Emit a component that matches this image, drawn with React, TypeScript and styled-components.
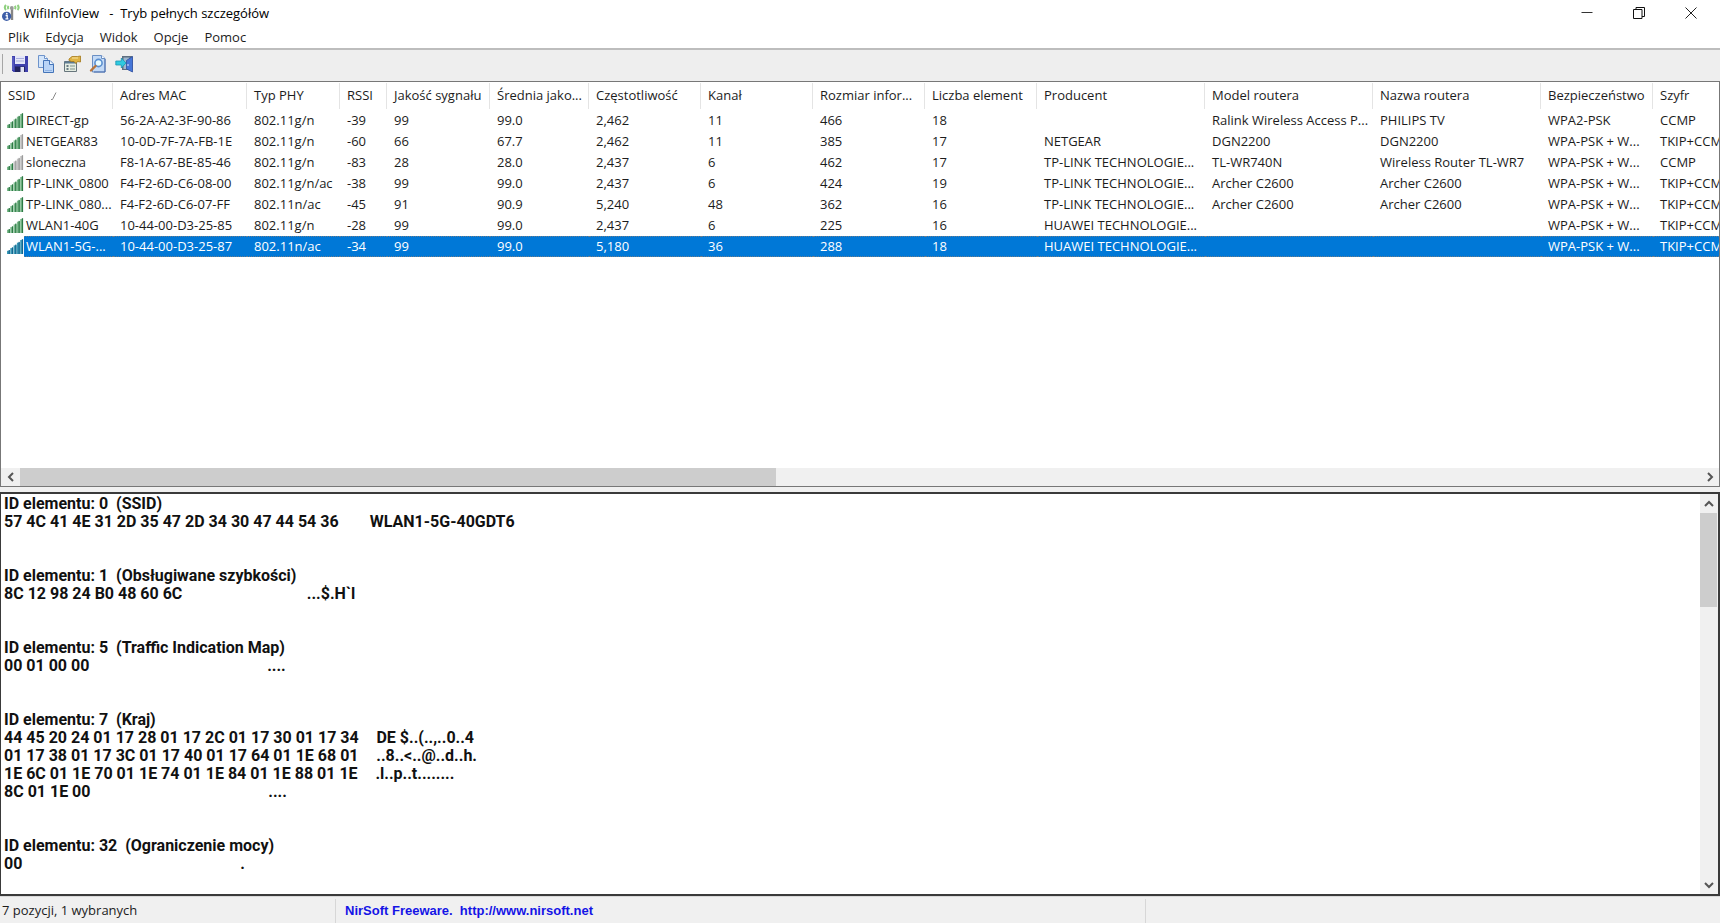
import React from "react";
import styled, { createGlobalStyle, css } from "styled-components";

const uiFont = `"Open Sans", "Noto Sans", sans-serif`;

const GlobalStyle = createGlobalStyle`
  *, *::before, *::after { box-sizing: border-box; }
  body { margin: 0; background: #fff; color: #1c1c1c; font: 13px/20px ${uiFont}; }
  button { font: inherit; color: inherit; border: 0; padding: 0; background: none; }
`;

const Window = styled.div`
  display: flex;
  flex-direction: column;
  height: 100vh;
  min-height: 400px;
  overflow: hidden;
  background: #f0f0f0;
`;

const TitleBar = styled.header`
  display: flex;
  align-items: center;
  flex: none;
  height: 26px;
  padding: 0 3px 0 2px;
  gap: 4px;
  background: #fff;
`;

const Title = styled.h1`
  flex: 1;
  margin: 0;
  font-size: 13px;
  font-weight: 400;
  white-space: pre;
  color: #000;
`;

const WindowButtons = styled.div`
  display: flex;
`;

const WindowButton = styled.button`
  display: flex;
  align-items: center;
  justify-content: center;
  width: 52px;
  height: 24px;
`;

const MenuBar = styled.nav`
  display: flex;
  flex: none;
  gap: 16px;
  height: 24px;
  padding: 0 8px;
  background: #fff;
  border-bottom: 2px solid #bdbdbd;
`;

const MenuButton = styled.button`
  height: 22px;
  line-height: 22px;
`;

const ToolBar = styled.div`
  display: flex;
  align-items: center;
  flex: none;
  height: 31px;
  padding: 0 0 4px 2px;
  background: #eeeeee;
`;

const Grip = styled.span`
  width: 1px;
  height: 20px;
  margin-right: 4px;
  background: #a6a6a6;
`;

const ToolButton = styled.button`
  display: flex;
  align-items: center;
  justify-content: center;
  width: 26px;
  height: 26px;
`;

const ListPane = styled.main`
  display: flex;
  flex-direction: column;
  flex: 1 1 6px;
  min-height: 0;
  border: 1px solid #777;
  background: #fff;
`;

const ListView = styled.div`
  flex: 1;
  min-height: 0;
  overflow: hidden;
`;

const Table = styled.table`
  width: 1780px;
  table-layout: fixed;
  border-collapse: separate;
  border-spacing: 0;
`;

const HeaderCell = styled.th`
  height: 28px;
  padding: 0 0 2px 7px;
  overflow: hidden;
  text-align: left;
  font-weight: 400;
  white-space: nowrap;
  background: linear-gradient(#e4e4e4, #e4e4e4) right 0 top 1px / 1px 26px no-repeat;
`;

const SortMark = styled.svg`
  margin-left: 16px;
`;

const Cell = styled.td`
  height: 21px;
  padding: 0 0 0 7px;
  overflow: hidden;
  line-height: 19px;
  white-space: nowrap;
`;

const NameCell = styled(Cell)`
  padding-left: 6px;
`;

const NameBox = styled.div`
  display: flex;
  align-items: center;
  height: 21px;
`;

const NameLabel = styled.span`
  flex: 1;
  height: 21px;
  padding-left: 2px;
  line-height: 21px;
`;

const selectedFill = css`
  color: #fff;
  background: #0078d7;
  border-top: 1px dotted #6b7d8c;
  border-bottom: 1px dotted #6b7d8c;
`;

const Row = styled.tr<{ $selected?: boolean }>`
  ${(p) =>
    p.$selected &&
    css`
      ${Cell}:not(:first-child) {
        ${selectedFill}
      }
      ${NameLabel} {
        ${selectedFill}
        line-height: 19px;
      }
    `}
`;

const HScroll = styled.div`
  display: flex;
  flex: none;
  height: 18px;
  background: #f0f0f0;
`;

const VScroll = styled.div`
  display: flex;
  flex-direction: column;
  flex: none;
  width: 18px;
  padding-right: 1px;
  background: #f0f0f0;
`;

const ScrollButton = styled.button`
  display: flex;
  align-items: center;
  justify-content: center;
  flex: none;
  width: 19px;
  height: 18px;

  ${VScroll} & {
    width: 17px;
    height: 19px;
  }
`;

const Track = styled.div`
  flex: 1;
`;

const HThumb = styled.div`
  width: 45%;
  height: 18px;
  background: #cdcdcd;
`;

const VThumb = styled.div`
  height: 26%;
  background: #cdcdcd;
`;

const DetailPane = styled.section`
  display: flex;
  flex: 1 1 0;
  min-height: 0;
  margin-top: 5px;
  border: 2px solid #3a3a3a;
  border-width: 2px 2px 2px 1px;
  background: #fff;
`;

const Dump = styled.pre`
  flex: 1;
  min-width: 0;
  margin: 0;
  padding: 1px 3px;
  overflow: hidden;
  font: 700 16px/18px Roboto, sans-serif;
  color: #111;
`;

const Pad = styled.span`
  font-family: "Liberation Sans", sans-serif;
`;

const StatusBar = styled.footer`
  display: flex;
  flex: none;
  height: 27px;
  padding-top: 2px;
  background: #f0f0f0;
  border-top: 1px solid #d9d9d9;
`;

const StatusPart = styled.div<{ $width?: number }>`
  width: ${(p) => (p.$width ? `${p.$width}px` : "auto")};
  flex: ${(p) => (p.$width ? "none" : "1")};
  padding-left: 2px;
  line-height: 22px;
  border-right: ${(p) => (p.$width ? "1px solid #d7d7d7" : "0")};
`;

const StatusLink = styled.a`
  padding-left: 7px;
  font: 700 13px/20px "Liberation Sans", sans-serif;
  color: #1414e6;
  text-decoration: none;
  white-space: pre;
`;

const AppIcon = () => (
  <svg width="18" height="18" viewBox="0 0 18 18" fill="none" aria-hidden="true">
    <path d="M4 1C2.600 2.500 2.600 4.500 4 6M6.600 1.800C5.800 2.900 5.800 4.100 6.600 5.200M15.500 1c1.400 1.500 1.400 3.500 0 5M12.800 1.800c.8 1.100.8 2.300 0 3.400" stroke="#8fd07f" strokeWidth="2" />
    <path d="M10 4v12" stroke="#858585" strokeWidth="2.400" />
    <circle cx="9.800" cy="4" r="1.900" fill="#9a9a9a" />
    <circle cx="4.600" cy="12.300" r="4.600" fill="#3d5ea8" />
    <path d="M3.600 11.500h1.600v3.300M3.400 14.900h3" stroke="#fff" strokeWidth="1.300" />
    <circle cx="4.800" cy="9.600" r=".9" fill="#fff" />
  </svg>
);

const SaveIcon = () => (
  <svg width="18" height="18" viewBox="0 0 18 18" aria-hidden="true">
    <path d="M1 1h16v16H2.500L1 15.500Z" fill="#3f41ad" />
    <path d="M4 1h10v8H4Z" fill="#e4e6f8" />
    <path d="M5 3.500h8M5 6h8" stroke="#a9aede" />
    <path d="M4 11.500h10V17H4Z" fill="#23245f" />
    <path d="M9.500 12h3.500v5H9.500Z" fill="#dfe1f2" />
    <path d="M2 2v13" stroke="#6f73d0" />
  </svg>
);

const CopyIcon = () => (
  <svg width="18" height="18" viewBox="0 0 18 18" aria-hidden="true">
    <path d="M1.500.500h6l3 3v9h-9Z" fill="#d3e5fa" stroke="#6d93cb" />
    <path d="M7.500.500v3h3" fill="#fff" stroke="#6d93cb" />
    <path d="M6.500 5.500h6.500l3.500 3.500v8.500h-10Z" fill="#b9d4f6" stroke="#4474b8" />
    <path d="M12.500 5.500v4h4" fill="#eef6ff" stroke="#4474b8" />
    <path d="M8 15.500h7" stroke="#8fb3e4" />
  </svg>
);

const PropertiesIcon = () => (
  <svg width="18" height="18" viewBox="0 0 18 18" aria-hidden="true">
    <path d="M1.500 6.500h12v10h-12Z" fill="#e4ece2" stroke="#66757c" />
    <path d="M1.500 6.500h12v2h-12Z" fill="#5d7b92" />
    <path d="M3.500 11h2M3.500 14h2" stroke="#3f5765" strokeWidth="1.500" />
    <path d="M7 11h5M7 14h5" stroke="#9fb0a8" strokeWidth="1.500" />
    <path d="M6 4 9 1.500h5.500L17.500 1v6l-3-.5-1.500 2-2-2H8.500L6 5.500Z" fill="#dfb343" stroke="#a5791b" strokeWidth=".8" />
    <path d="M9 3h6" stroke="#f8e3a0" />
  </svg>
);

const FindIcon = () => (
  <svg width="18" height="18" viewBox="0 0 18 18" aria-hidden="true">
    <path d="M3.500.500h9l3.500 3v13.500H3.500Z" fill="#c3daf6" stroke="#6a8fc4" />
    <path d="M12.500.500v3H16" fill="#fff" stroke="#6a8fc4" />
    <path d="M16 4v13H5" fill="none" stroke="#4a6fae" />
    <circle cx="9.500" cy="8" r="3.600" fill="#e8fbff" stroke="#5a8fd0" strokeWidth="1.600" />
    <path d="M6.500 11 2 15.500" stroke="#b8753b" strokeWidth="2.400" strokeLinecap="round" />
  </svg>
);

const ExitIcon = () => (
  <svg width="18" height="18" viewBox="0 0 18 18" aria-hidden="true">
    <path d="M7 1h10.500v14H7Z" fill="#5f6f80" />
    <path d="M8.500 2.500h6V14h-6Z" fill="#9fb8cf" />
    <path d="M11.500 5.500 17.500 1.500V17l-6-3Z" fill="#4676d8" stroke="#2f4fa0" strokeWidth=".8" />
    <path d="M13 9v2" stroke="#dfe9ff" />
    <path d="M.8 6h5.500V3L11 8l-4.700 5v-3H.8Z" fill="#2fcbe0" stroke="#1c93b3" strokeWidth=".8" />
  </svg>
);

const tones: Record<string, { on: string; edge: string }> = {
  green: { on: "#7dbb8d", edge: "#2c7a45" },
  blue: { on: "#3a9bb8", edge: "#13658f" },
};

const SignalIcon = ({ level, tone = "green" }: { level: number; tone?: string }) => (
  <svg width="17" height="18" viewBox="0 0 17 18" aria-hidden="true">
    {[0, 1, 2, 3, 4].map((i) => {
      const on = i < level;
      const top = 12 - i * 2.7;
      return (
        <g key={i}>
          <rect x={i * 3.3} y={top + 0.8} width="2.8" height={15.2 - top} fill={on ? tones[tone].on : "#c4c4c4"} />
          <rect x={i * 3.3 + 1.6} y={top} width="1.3" height={16 - top} fill={on ? tones[tone].edge : "#9b9b9b"} />
        </g>
      );
    })}
  </svg>
);

const chevrons: Record<string, string> = {
  left: "M7 1 3 5l4 4",
  right: "M3 1l4 4-4 4",
  up: "M1 7l4-4 4 4",
  down: "M1 3l4 4 4-4",
};

const Chevron = ({ dir }: { dir: string }) => (
  <svg width="10" height="10" viewBox="0 0 10 10" fill="none" stroke="#555" strokeWidth="2" aria-hidden="true">
    <path d={chevrons[dir]} />
  </svg>
);

const columns: [string, number | undefined][] = [
  ["SSID", 112],
  ["Adres MAC", 134],
  ["Typ PHY", 93],
  ["RSSI", 47],
  ["Jakość sygnału", 103],
  ["Średnia jako...", 99],
  ["Częstotliwość", 112],
  ["Kanał", 112],
  ["Rozmiar infor...", 112],
  ["Liczba element", 112],
  ["Producent", 168],
  ["Model routera", 168],
  ["Nazwa routera", 168],
  ["Bezpieczeństwo", 112],
  ["Szyfr", undefined],
];

const networks: { level: number; selected?: boolean; cells: string[] }[] = [
  { level: 5, cells: ["DIRECT-gp", "56-2A-A2-3F-90-86", "802.11g/n", "-39", "99", "99.0", "2,462", "11", "466", "18", "", "Ralink Wireless Access P...", "PHILIPS TV", "WPA2-PSK", "CCMP"] },
  { level: 4, cells: ["NETGEAR83", "10-0D-7F-7A-FB-1E", "802.11g/n", "-60", "66", "67.7", "2,462", "11", "385", "17", "NETGEAR", "DGN2200", "DGN2200", "WPA-PSK + W...", "TKIP+CCMP"] },
  { level: 2, cells: ["sloneczna", "F8-1A-67-BE-85-46", "802.11g/n", "-83", "28", "28.0", "2,437", "6", "462", "17", "TP-LINK TECHNOLOGIE...", "TL-WR740N", "Wireless Router TL-WR7", "WPA-PSK + W...", "CCMP"] },
  { level: 5, cells: ["TP-LINK_0800", "F4-F2-6D-C6-08-00", "802.11g/n/ac", "-38", "99", "99.0", "2,437", "6", "424", "19", "TP-LINK TECHNOLOGIE...", "Archer C2600", "Archer C2600", "WPA-PSK + W...", "TKIP+CCMP"] },
  { level: 5, cells: ["TP-LINK_080...", "F4-F2-6D-C6-07-FF", "802.11n/ac", "-45", "91", "90.9", "5,240", "48", "362", "16", "TP-LINK TECHNOLOGIE...", "Archer C2600", "Archer C2600", "WPA-PSK + W...", "TKIP+CCMP"] },
  { level: 5, cells: ["WLAN1-40G", "10-44-00-D3-25-85", "802.11g/n", "-28", "99", "99.0", "2,437", "6", "225", "16", "HUAWEI TECHNOLOGIE...", "", "", "WPA-PSK + W...", "TKIP+CCMP"] },
  { level: 5, selected: true, cells: ["WLAN1-5G-...", "10-44-00-D3-25-87", "802.11n/ac", "-34", "99", "99.0", "5,180", "36", "288", "18", "HUAWEI TECHNOLOGIE...", "", "", "WPA-PSK + W...", "TKIP+CCMP"] },
];

const elements: { id: number; name: string; lines: [string, string][] }[] = [
  { id: 0, name: "SSID", lines: [["57 4C 41 4E 31 2D 35 47 2D 34 30 47 44 54 36", "WLAN1-5G-40GDT6"]] },
  { id: 1, name: "Obsługiwane szybkości", lines: [["8C 12 98 24 B0 48 60 6C", "...$.H`l"]] },
  { id: 5, name: "Traffic Indication Map", lines: [["00 01 00 00", "...."]] },
  {
    id: 7,
    name: "Kraj",
    lines: [
      ["44 45 20 24 01 17 28 01 17 2C 01 17 30 01 17 34", "DE $..(..,..0..4"],
      ["01 17 38 01 17 3C 01 17 40 01 17 64 01 1E 68 01", "..8..<..@..d..h."],
      ["1E 6C 01 1E 70 01 1E 74 01 1E 84 01 1E 88 01 1E", ".l..p..t........"],
      ["8C 01 1E 00", "...."],
    ],
  },
  { id: 32, name: "Ograniczenie mocy", lines: [["00", "."]] },
];

// Sixteen bytes take 47 characters; the text column follows after four spaces.
const padding = (hex: string) => " ".repeat(47 - hex.length + 4);

export default function App() {
  return (
    <Window>
      <GlobalStyle />
      <TitleBar>
        <AppIcon />
        <Title>{"WifiInfoView   -  Tryb pełnych szczegółów"}</Title>
        <WindowButtons>
          <WindowButton aria-label="Minimalizuj">
            <svg width="12" height="12" viewBox="0 0 12 12"><path d="M.5 5.500h11" stroke="#333" /></svg>
          </WindowButton>
          <WindowButton aria-label="Przywróć w dół">
            <svg width="12" height="12" viewBox="0 0 12 12" fill="none" stroke="#111"><path d="M.5 2.500h8.500v9H.5ZM3 2.500v-2h8.500v9H9" /></svg>
          </WindowButton>
          <WindowButton aria-label="Zamknij">
            <svg width="12" height="12" viewBox="0 0 12 12" stroke="#222"><path d="M.5.5l11 11M11.500.5l-11 11" /></svg>
          </WindowButton>
        </WindowButtons>
      </TitleBar>
      <MenuBar>
        {["Plik", "Edycja", "Widok", "Opcje", "Pomoc"].map((m) => (
          <MenuButton key={m}>{m}</MenuButton>
        ))}
      </MenuBar>
      <ToolBar role="toolbar">
        <Grip />
        <ToolButton aria-label="Zapisz"><SaveIcon /></ToolButton>
        <ToolButton aria-label="Kopiuj"><CopyIcon /></ToolButton>
        <ToolButton aria-label="Właściwości"><PropertiesIcon /></ToolButton>
        <ToolButton aria-label="Znajdź"><FindIcon /></ToolButton>
        <ToolButton aria-label="Wyjście"><ExitIcon /></ToolButton>
      </ToolBar>
      <ListPane>
        <ListView>
          <Table>
            <colgroup>
              {columns.map(([name, width]) => (
                <col key={name} width={width} />
              ))}
            </colgroup>
            <thead>
              <tr>
                {columns.map(([name], i) => (
                  <HeaderCell key={name} scope="col">
                    {name}
                    {i === 0 && (
                      <SortMark width="6" height="8" viewBox="0 0 6 8" aria-hidden="true">
                        <path d="M0 7.500h1.500L5 .5" fill="none" stroke="#8a8a8a" />
                      </SortMark>
                    )}
                  </HeaderCell>
                ))}
              </tr>
            </thead>
            <tbody>
              {networks.map((n) => (
                <Row key={n.cells[1]} $selected={n.selected}>
                  <NameCell>
                    <NameBox>
                      <SignalIcon level={n.level} tone={n.selected ? "blue" : "green"} />
                      <NameLabel>{n.cells[0]}</NameLabel>
                    </NameBox>
                  </NameCell>
                  {n.cells.slice(1).map((c, i) => (
                    <Cell key={i}>{c}</Cell>
                  ))}
                </Row>
              ))}
            </tbody>
          </Table>
        </ListView>
        <HScroll>
          <ScrollButton aria-label="Przewiń w lewo"><Chevron dir="left" /></ScrollButton>
          <Track><HThumb /></Track>
          <ScrollButton aria-label="Przewiń w prawo"><Chevron dir="right" /></ScrollButton>
        </HScroll>
      </ListPane>
      <DetailPane>
        <Dump>
          {elements.map((e) => (
            <React.Fragment key={e.id}>
              {`ID elementu: ${e.id}  (${e.name})\n`}
              {e.lines.map(([hex, text]) => (
                <React.Fragment key={hex}>
                  {hex}
                  <Pad>{padding(hex)}</Pad>
                  {`${text}\n`}
                </React.Fragment>
              ))}
              {"\n\n"}
            </React.Fragment>
          ))}
        </Dump>
        <VScroll>
          <ScrollButton aria-label="Przewiń w górę"><Chevron dir="up" /></ScrollButton>
          <Track><VThumb /></Track>
          <ScrollButton aria-label="Przewiń w dół"><Chevron dir="down" /></ScrollButton>
        </VScroll>
      </DetailPane>
      <StatusBar>
        <StatusPart $width={336}>7 pozycji, 1 wybranych</StatusPart>
        <StatusPart $width={810}>
          <StatusLink href="http://www.nirsoft.net">{"NirSoft Freeware.  http://www.nirsoft.net"}</StatusLink>
        </StatusPart>
        <StatusPart />
      </StatusBar>
    </Window>
  );
}
